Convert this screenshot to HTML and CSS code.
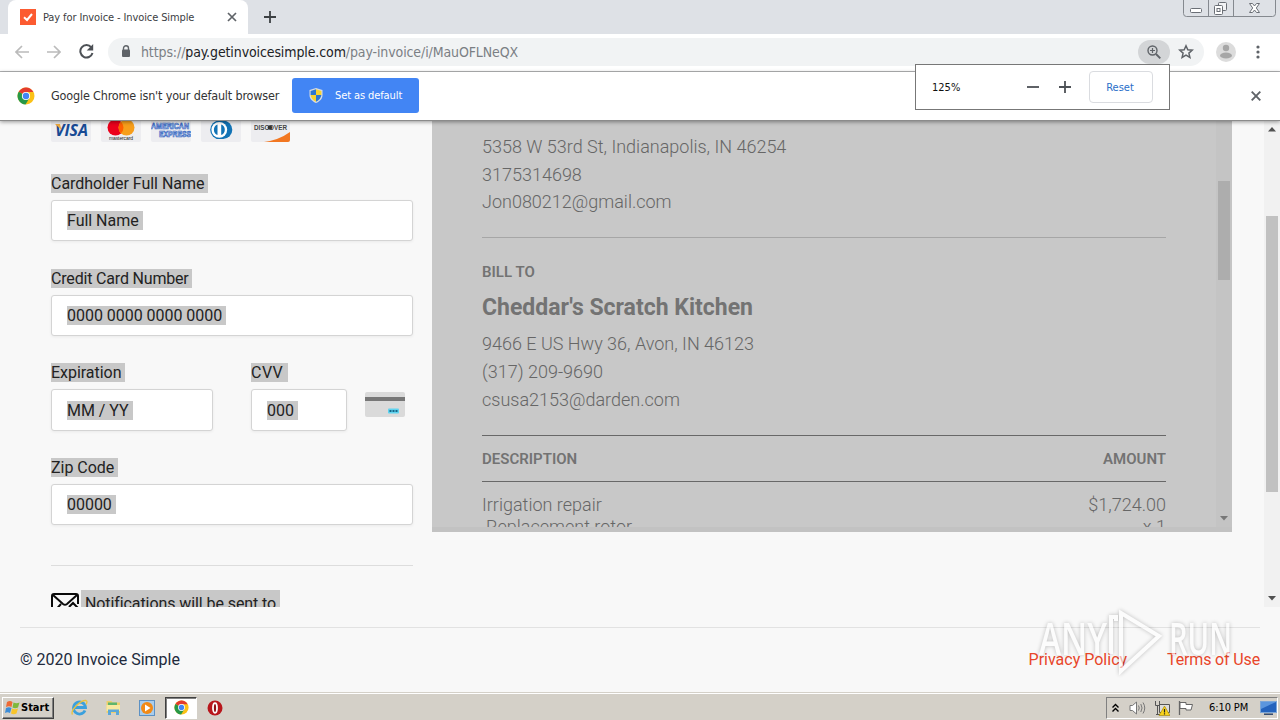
FILE: index.html
```html
<!DOCTYPE html>
<html lang="en">
<head>
  <meta charset="UTF-8">
  <title>Pay for Invoice - Invoice Simple</title>
  <link rel="stylesheet" href="styles.css">
</head>
<body>
  <!-- browser tabs -->
  <div class="tabstrip">
    <div class="tab">
      <svg class="favicon" width="16" height="16" viewBox="0 0 16 16"><path fill="#fc5b31" d="M0 0h16v16H0z"/><path d="M4 8.3l3 2.7 5-6" fill="none" stroke="#fff" stroke-width="2"/></svg>
      <span class="tab-title">Pay for Invoice - Invoice Simple</span>
      <svg width="10" height="10" viewBox="0 0 10 10"><path d="M1 1l8 8M9 1L1 9" stroke="#5f6368" stroke-width="1.7"/></svg>
    </div>
    <svg class="newtab" width="12" height="12" viewBox="0 0 12 12"><path d="M6 0v12M0 6h12" stroke="#3c4043" stroke-width="1.8"/></svg>
    <div class="wincontrols">
      <svg width="93" height="17" viewBox="0 0 93 17" fill="none" stroke="#6b6f76">
        <path d="M.5 0v13.500q0 3 3 3h86q3 0 3-3V0M25.500 0v16M50.500 0v16" stroke="#85898f"/>
        <rect x="7.500" y="8.500" width="11" height="4" rx="1" fill="#fff"/>
        <rect x="35.500" y="2.500" width="8" height="8" rx="1" fill="#f2f3f5"/>
        <rect x="31.500" y="5.500" width="8" height="9" rx="1" fill="#fff"/>
        <rect x="34" y="8.500" width="3" height="3"/>
        <path d="M66.500 3.500h3l2 2.500 2-2.500h3L73.300 8l3.200 4.500h-3l-2-2.500-2 2.500h-3L69.700 8z" fill="#fff"/>
      </svg>
    </div>
  </div>

  <!-- toolbar -->
  <div class="toolbar">
    <svg class="nav" width="14" height="14" viewBox="0 0 14 14" fill="none" stroke="#bbb" stroke-width="1.7"><path d="M14 7H1M7 1L1 7l6 6"/></svg>
    <svg class="nav" width="14" height="14" viewBox="0 0 14 14" fill="none" stroke="#bbb" stroke-width="1.7"><path d="M0 7h13M7 1l6 6-6 6"/></svg>
    <svg class="nav" width="15" height="15" viewBox="0 0 15 15"><path d="M12.300 3.300A6.200 6.200 0 1 0 13.500 9" fill="none" stroke="#4d5156" stroke-width="2"/><path d="M14.200 0v6.500H7.700z" fill="#4d5156"/></svg>
    <div class="omnibox">
      <svg width="10" height="13" viewBox="0 0 10 13"><path d="M2.500 5V3.300a2.500 2.500 0 0 1 5 0V5" fill="none" stroke="#5f6368" stroke-width="1.400"/><rect x="1" y="4.500" width="8" height="7.500" rx="1" fill="#5f6368"/></svg>
      <span class="url">https://<b>pay.getinvoicesimple.com</b>/pay-invoice/i/MauOFLNeQX</span>
      <span class="zoomchip"><svg width="14" height="14" viewBox="0 0 14 14" fill="none" stroke="#5f6368"><circle cx="5.500" cy="5.500" r="4.500" stroke-width="1.400"/><path d="M9 9l4.300 4.300" stroke-width="1.900"/><path d="M5.500 3v5M3 5.500h5" stroke-width="1.200"/></svg></span>
      <svg class="star" width="16" height="15" viewBox="0 0 16 15"><path d="M8 1.800l1.800 4 4.400.4-3.300 2.900 1 4.300L8 11.100l-3.900 2.300 1-4.300L1.800 6.200l4.400-.4z" fill="none" stroke="#5f6368" stroke-width="1.500"/></svg>
    </div>
    <svg class="avatar" width="20" height="20" viewBox="0 0 20 20"><circle cx="10" cy="10" r="10" fill="#dcdcdc"/><circle cx="10" cy="6" r="3.200" fill="#a6a6a6"/><ellipse cx="10" cy="13.500" rx="6" ry="3" fill="#a6a6a6"/></svg>
    <svg class="dots" width="4" height="14" viewBox="0 0 4 14" fill="#5f6368"><circle cx="2" cy="2" r="1.600"/><circle cx="2" cy="7" r="1.600"/><circle cx="2" cy="12" r="1.600"/></svg>
  </div>

  <div class="infobar">
    <svg class="chrome-logo" width="18" height="18" viewBox="0 0 18 18"><use href="#chrome"/></svg>
    <span class="infotext">Google Chrome isn't your default browser</span>
    <button class="default-btn">
      <svg width="14" height="15" viewBox="0 0 14 15"><path d="M7 0l6.500 2v5c0 4-3 6.500-6.500 8C3.500 13.500.5 11 .5 7V2z" fill="#d7dce2"/><path d="M7 1.300V7H1.600V2.900z" fill="#2d77d1"/><path d="M7 1.300V7h5.400V2.900zM1.600 7H7v6.700C4 12.300 2 10 1.600 7z" fill="#f8d32f"/><path d="M12.400 7H7v6.700C10 12.300 12 10 12.400 7z" fill="#2d77d1"/></svg>
      <span>Set as default</span>
    </button>
    <svg class="info-close" width="10" height="10" viewBox="0 0 10 10"><path d="M.7.700l8.600 8.600M9.300.700L.7 9.300" stroke="#5f6368" stroke-width="1.900"/></svg>
    <div class="zoom-bubble">
      <span class="percent">125%</span>
      <svg width="12" height="12" viewBox="0 0 12 12"><path d="M0 6h12" stroke="#4d5156" stroke-width="1.800"/></svg>
      <svg width="12" height="12" viewBox="0 0 12 12"><path d="M0 6h12M6 0v12" stroke="#4d5156" stroke-width="1.800"/></svg>
      <button class="reset">Reset</button>
    </div>
  </div>

  <div class="viewport">
    <div class="form">
      <div class="cards">
        <svg width="40" height="25" viewBox="0 0 40 25"><rect width="40" height="25" rx="2" fill="#ededf0"/><text class="visa" x="4" y="18.500" textLength="33" lengthAdjust="spacingAndGlyphs">VISA</text><path d="M4 7h5l1.500 6z" fill="#efaa3d"/></svg>
        <svg width="40" height="25" viewBox="0 0 40 25"><rect width="40" height="25" rx="2" fill="#ededf0"/><circle cx="14.500" cy="10.500" r="8" fill="#eb001b"/><circle cx="25.500" cy="10.500" r="8" fill="#f79e1b"/><path d="M20 4.700a8 8 0 0 1 0 11.600 8 8 0 0 1 0-11.600z" fill="#ff5f00"/><text class="mc" x="8" y="23" textLength="24">mastercard</text></svg>
        <svg width="40" height="25" viewBox="0 0 40 25"><rect width="40" height="25" rx="2" fill="#ededf0"/><text class="amex" x="0" y="11.500" textLength="38" lengthAdjust="spacingAndGlyphs">AMERICAN</text><text class="amex" x="8" y="19.500" textLength="32" lengthAdjust="spacingAndGlyphs">EXPRESS</text></svg>
        <svg width="40" height="25" viewBox="0 0 40 25"><rect width="40" height="25" rx="2" fill="#ededf0"/><path d="M18 3.500h4a9.300 9.300 0 0 1 0 18.600h-4z" fill="#1273b5"/><circle cx="18.500" cy="12.800" r="9.300" fill="#1273b5"/><circle cx="18.300" cy="12.800" r="7.900" fill="#fff"/><path d="M16.500 7.500a5.700 5.700 0 0 0 0 10.600zM20.200 7.500a5.700 5.700 0 0 1 0 10.600z" fill="#1273b5"/></svg>
        <svg width="39" height="25" viewBox="0 0 39 25"><rect width="39" height="25" rx="2" fill="#ededf0"/><path d="M39 15v8q0 2-2 2H13q15-2 26-10z" fill="#f27721"/><text class="disc" x="3" y="13" textLength="33" lengthAdjust="spacingAndGlyphs">DISCOVER</text><circle cx="18.900" cy="10.500" r="2.300" fill="#333"/></svg>
      </div>
      <div class="field">
        <label><mark>Cardholder Full Name </mark></label>
        <div class="input"><mark>Full Name </mark></div>
      </div>
      <div class="field">
        <label><mark class="tight">Credit Card Number </mark></label>
        <div class="input"><mark>0000 0000 0000 0000 </mark></div>
      </div>
      <div class="row">
        <div class="field exp">
          <label><mark>Expiration </mark></label>
          <div class="input"><mark>MM / YY </mark></div>
        </div>
        <div class="field cvv">
          <label><mark class="wide">CVV </mark></label>
          <div class="input"><mark>000 </mark></div>
        </div>
        <svg class="cvv-card" width="40" height="25" viewBox="0 0 40 25"><rect width="40" height="25" rx="2" fill="#dadada"/><path d="M0 5h40v4H0z" fill="#777"/><rect x="23" y="16.500" width="11" height="5" rx="1" fill="#5fd3ef"/><path d="M24.500 19h8" stroke="#16688a" stroke-width="1.800" stroke-dasharray="2 1"/></svg>
      </div>
      <div class="field">
        <label><mark>Zip Code </mark></label>
        <div class="input"><mark>00000 </mark></div>
      </div>
      <div class="notify">
        <svg width="28" height="22" viewBox="0 0 28 22" fill="none" stroke="#0a0a0a" stroke-width="2"><path d="M27 11V3q0-2-2-2H3Q1 1 1 3v16q0 2 2 2h12M2 2l10 9q2 1.500 4 0L26 2M2 20l8-9M18 14l4-4 5 5"/></svg>
        <mark> Notifications will be sent to </mark>
      </div>
    </div>

    <div class="invoice">
      <div class="invoice-body">
        <p class="l1">5358 W 53rd St, Indianapolis, IN 46254</p>
        <p class="l2">3175314698</p>
        <p class="l3">Jon080212@gmail.com</p>
        <div class="billto">
          <h4>BILL TO</h4>
          <h2>Cheddar's Scratch Kitchen</h2>
          <p class="l4">9466 E US Hwy 36, Avon, IN 46123</p>
          <p class="l5">(317) 209-9690</p>
          <p class="l6">csusa2153@darden.com</p>
        </div>
        <div class="items-head"><span>DESCRIPTION</span><span>AMOUNT</span></div>
        <div class="item"><span>Irrigation repair</span><span>$1,724.00</span></div>
        <div class="item detail"><span>Replacement rotor</span><span>x 1</span></div>
      </div>
      <div class="invoice-scroll">
        <div class="thumb"></div>
        <svg width="8" height="5" viewBox="0 0 8 5"><path d="M0 0h8L4 4.500z" fill="#777"/></svg>
      </div>
    </div>

    <div class="scrollbar">
      <svg width="8" height="5" viewBox="0 0 8 5"><path d="M0 4.500h8L4 0z" fill="#505050"/></svg>
      <div class="thumb"></div>
      <svg class="down" width="8" height="5" viewBox="0 0 8 5"><path d="M0 0h8L4 4.500z" fill="#505050"/></svg>
    </div>
  </div>

  <footer>
    <div class="footer-inner">
      <span>© 2020 Invoice Simple</span>
      <nav><a href="#">Privacy Policy</a><a href="#">Terms of Use</a></nav>
    </div>
    <div class="watermark">
      <svg width="200" height="68" viewBox="0 0 200 68">
        <g class="wm-shape"><path d="M84 4l38 23-38 35z"/><path d="M79 12v-4h-5v37"/></g>
        <text x="2" y="46" textLength="68" lengthAdjust="spacingAndGlyphs">ANY</text>
        <text x="132" y="46" textLength="63" lengthAdjust="spacingAndGlyphs">RUN</text>
      </svg>
    </div>
  </footer>

  <!-- taskbar -->
  <div class="taskbar">
    <div class="start">
      <svg width="15" height="15" viewBox="0 0 15 15"><path d="M2 2q3-2 5.500 0L6.500 7Q4 5.500 1 7z" fill="#ee6a35"/><path d="M8.500 2.500q3 1.500 6 0L13 7.500q-3 1.500-5.500 0z" fill="#7fb83c"/><path d="M1 8q3-1.500 5.500 0L5 13q-2.500-1.500-5 0z" fill="#3d8dd8"/><path d="M7 8.500q3 1.500 6 0l-1.500 5q-3 1.500-5.500 0z" fill="#f8c52c"/></svg>
      <span>Start</span>
    </div>
    <div class="launch">
      <svg width="17" height="17" viewBox="0 0 17 17"><path d="M14 11.500A6 6 0 1 1 14.500 8.500H4" fill="none" stroke="#3ba0dd" stroke-width="2.800"/><path d="M1.500 15.500C-1 12 9 1 15 1.500c1.500.5 1 2.500 0 4" fill="none" stroke="#e9c23e" stroke-width="1.300"/></svg>
    </div>
    <div class="launch">
      <svg width="17" height="17" viewBox="0 0 17 17"><path d="M1.500 2h5l1 1.500H15V14H1.500z" fill="#edcf6a"/><path d="M3 3.500h9V6H3z" fill="#5eb56d"/><path d="M1.500 6H15v6H1.500z" fill="#f8e9a1"/><path d="M3 16V10.500h11V16h-3v-3H6v3z" fill="#5ba7d8"/></svg>
    </div>
    <div class="launch">
      <svg width="16" height="16" viewBox="0 0 16 16"><rect x=".5" y=".5" width="15" height="15" fill="#a9cdec" stroke="#5c91c4"/><circle cx="8" cy="8" r="6" fill="#f28a16"/><path d="M6 4.500v7L11.500 8z" fill="#fff"/></svg>
    </div>
    <div class="launch active">
      <svg width="15" height="15" viewBox="0 0 18 18">
        <g id="chrome"><circle cx="9" cy="9" r="8.500" fill="#fbc116"/><path d="M9 9L1.700 4.700A8.500 8.500 0 0 1 16.400 5H9z" fill="#e33b2e"/><path d="M9 9l-7.300-4.300A8.500 8.500 0 0 0 8.500 17.500L12.500 11z" fill="#279847"/><circle cx="9" cy="9" r="4.100" fill="#fff"/><circle cx="9" cy="9" r="3.200" fill="#4285f4"/></g>
      </svg>
    </div>
    <div class="launch">
      <svg width="16" height="16" viewBox="0 0 16 16"><circle cx="8" cy="8" r="7.500" fill="#b8161c"/><ellipse cx="8" cy="8" rx="2" ry="4.800" fill="#8e1015" stroke="#fff" stroke-width="1.800"/></svg>
    </div>
    <div class="tray">
      <svg width="7" height="10" viewBox="0 0 7 10" fill="none" stroke="#000" stroke-width="1.400"><path d="M.5 4.500l3-3 3 3M.5 8.500l3-3 3 3"/></svg>
      <svg width="17" height="14" viewBox="0 0 17 14" fill="none" stroke="#777"><path d="M1 4.500h2.500L7.500 1v12L3.500 9.500H1z" fill="#fff"/><path d="M9.500 4.500q1.500 2.500 0 5M11.800 3q2.500 4 0 8M14 1.500q3.500 5.500 0 11"/></svg>
      <svg width="16" height="16" viewBox="0 0 16 16"><path d="M5.500 4.500h10v8h-10z" fill="#ddd" stroke="#555"/><path d="M1.500 1v4.500h4V1M3.500 6v9M2 14.500h5" fill="none" stroke="#555"/><path d="M10.500 6L16 15.500H5z" fill="#f8d21c" stroke="#9a7d00" stroke-width=".6"/><path d="M10.500 9v3.500M10.500 13.300v1.200" stroke="#222" stroke-width="1.200"/></svg>
      <svg width="16" height="16" viewBox="0 0 16 16"><path d="M1.500 1v14" stroke="#666" stroke-width="1.300"/><path d="M2 2.500h6v2h6.500L13 10H8V8.500H2z" fill="#fff" stroke="#666"/></svg>
      <span class="clock">6:10 PM</span>
      <svg class="show-desk" width="17" height="14" viewBox="0 0 17 14"><rect x=".5" y=".5" width="16" height="11" fill="#2463bd" stroke="#7ba6d8"/><path d="M1 1h15L1 8z" fill="#5b96de"/><path d="M4 13.200h9" stroke="#243f66" stroke-width="1.400"/></svg>
    </div>
  </div>
</body>
</html>
```
FILE: styles.css
```css
* {
  box-sizing: border-box;
  margin: 0;
}

body {
  width: 1280px;
  height: 720px;
  overflow: hidden;
  display: flex;
  flex-direction: column;
  background: #f8f8f8;
  font-family: Roboto, sans-serif;
  font-size: 16px;
  color: #222;
}

svg {
  display: block;
  flex: none;
}

button {
  font: inherit;
  border: 0;
}

/* browser window */

.tabstrip, .toolbar, .infobar, .taskbar {
  flex: none;
  display: flex;
  align-items: center;
  font-family: "DejaVu Sans Condensed", "DejaVu Sans", sans-serif;
  font-stretch: condensed;
  white-space: nowrap;
}

.tabstrip {
  height: 34px;
  padding-left: 8px;
  background: #dee1e6;
}

.tab {
  width: 240px;
  height: 34px;
  padding: 0 11px 0 12px;
  display: flex;
  align-items: center;
  background: #fff;
  border-radius: 8px 8px 0 0;
}

.tab-title {
  width: 191px;
  padding-left: 7px;
  font-size: 11px;
  letter-spacing: -0.11px;
  color: #3c4043;
}

.newtab {
  margin-left: 16px;
}

.wincontrols {
  margin-left: auto;
  padding-right: 4px;
  align-self: flex-start;
}

.toolbar {
  height: 38px;
  padding: 0 20px 2px 15px;
  background: #fff;
  border-bottom: 1px solid #b4b5b7;
}

.nav {
  margin-right: 18px;
}

.omnibox {
  width: 1096px;
  height: 28px;
  margin-left: -4px;
  padding: 0 10px 0 13px;
  display: flex;
  align-items: center;
  border-radius: 14px;
  background: #f1f3f4;
}

.url {
  margin-left: 10px;
  font-size: 14px;
  letter-spacing: -0.11px;
  color: #7b7f84;
}

.url b {
  font-weight: normal;
  color: #202124;
}

.zoomchip {
  width: 32px;
  height: 24px;
  margin-left: auto;
  display: flex;
  align-items: center;
  justify-content: center;
  border-radius: 12px;
  background: #d3d5d7;
}

.star {
  margin-left: 8px;
}

.avatar {
  margin-left: 12px;
}

.dots {
  margin-left: auto;
}

.infobar {
  position: relative;
  z-index: 2;
  height: 49px;
  padding: 0 19px 0 17px;
  background: #fff;
  border-bottom: 1px solid #8b8b8b;
  box-shadow: 0 1px 4px rgba(0, 0, 0, 0.4);
}

.infotext {
  width: 241px;
  margin-left: 16px;
  padding-bottom: 2px;
  font-size: 12.5px;
  letter-spacing: -0.17px;
  color: #333;
}

.default-btn {
  width: 127px;
  height: 35px;
  margin-bottom: 2px;
  padding: 0 0 0 17px;
  display: flex;
  align-items: center;
  gap: 12px;
  border-radius: 3px;
  background: #4285f4;
  color: #fff;
  font-size: 11px;
  letter-spacing: -0.1px;
}

.info-close {
  margin-left: auto;
}

.zoom-bubble {
  position: absolute;
  top: -8px;
  left: 915px;
  width: 255px;
  height: 46px;
  padding-left: 16px;
  display: flex;
  align-items: center;
  gap: 20px;
  border: 1px solid #777;
  background: #fff;
  font-size: 11px;
}

.percent {
  width: 75px;
  color: #111;
}

.reset {
  width: 64px;
  height: 32px;
  margin-left: -2px;
  padding: 0 2px 0 0;
  border: 1px solid #dadce0;
  border-radius: 4px;
  background: #fff;
  color: #2a6fc9;
}

/* page */

.viewport {
  flex: none;
  height: 486px;
  display: flex;
  align-items: flex-start;
  overflow: hidden;
  background: #f8f8f8;
}

.form {
  width: 362px;
  margin: -4px 19px 0 51px;
}

.cards {
  display: flex;
  gap: 10px;
  margin-bottom: 32px;
}

.visa {
  font: italic bold 16px "Open Sans", sans-serif;
  fill: #174a94;
}

.mc {
  font: 5px "Liberation Sans", sans-serif;
  fill: #222;
}

.amex {
  font: bold 9px "Liberation Sans", sans-serif;
  fill: #d9e2f5;
  stroke: #2f62c0;
  stroke-width: 0.7px;
}

.disc {
  font: bold 7px "Liberation Sans", sans-serif;
  fill: #444;
}

mark {
  display: inline-block;
  height: 19px;
  line-height: 19px;
  white-space: pre;
  letter-spacing: -0.03px;
  background: #c8c8c8;
  color: #222;
}

.tight {
  letter-spacing: -0.18px;
}

.wide {
  letter-spacing: 0.5px;
}

.field {
  height: 94.670px;
}

.field label {
  display: block;
  height: 26px;
  line-height: 19px;
}

.input {
  height: 41.400px;
  padding-left: 15px;
  display: flex;
  align-items: center;
  border: 1px solid #d4d4d4;
  border-radius: 3px;
  background: #fff;
  box-shadow: 0 1px 3px rgba(0, 0, 0, 0.06);
}

.row {
  display: flex;
}

.exp {
  width: 162px;
  margin-right: 38px;
}

.cvv {
  width: 96px;
  margin-right: 18px;
}

.cvv-card {
  margin-top: 29px;
}

.notify {
  height: 60px;
  margin-top: 12px;
  padding-top: 24px;
  display: flex;
  gap: 2px;
  border-top: 1px solid #ddd;
}

.notify svg {
  margin-top: 3px;
}

.notify mark {
  height: 27px;
  line-height: 27px;
  letter-spacing: -0.08px;
}

.invoice {
  width: 800px;
  height: 411px;
  display: flex;
  background: #c8c8c8;
  border-bottom: 5px solid #c2c2c2;
}

.invoice-body {
  width: 734px;
  height: 406px;
  padding: 12px 0 0 50px;
  overflow: hidden;
  font-size: 18px;
  font-weight: 300;
  line-height: 28px;
  color: #666;
}

.l2, .l3 {
  margin-top: -0.5px;
}

.billto {
  margin-top: 21px;
  padding-top: 24px;
  height: 198px;
  border-top: 1px solid #a6a6a6;
}

.billto h4, .items-head {
  font-size: 15px;
  line-height: 20px;
  font-weight: 600;
  color: #737373;
}

.billto h2 {
  margin: 10px 0 6px;
  font-size: 23px;
  line-height: 32px;
  color: #737373;
}

.items-head {
  height: 47px;
  padding-top: 1px;
  display: flex;
  align-items: center;
  justify-content: space-between;
  border-top: 1px solid #686868;
  border-bottom: 1px solid #686868;
}

.item {
  height: 22px;
  margin-top: 12px;
  line-height: 22px;
  display: flex;
  justify-content: space-between;
}

.detail {
  margin-top: 0;
  padding-left: 4px;
}

.invoice-scroll {
  width: 16px;
  height: 406px;
  margin-left: auto;
  padding: 60px 0 6px;
  display: flex;
  flex-direction: column;
  align-items: center;
  justify-content: space-between;
  background: #c4c4c4;
}

.invoice-scroll .thumb {
  width: 12px;
  height: 99px;
  background: #adadad;
}

.scrollbar {
  width: 16px;
  height: 486px;
  margin-left: auto;
  padding: 6px 0;
  display: flex;
  flex-direction: column;
  align-items: center;
  background: #f1f1f1;
}

.scrollbar .thumb {
  width: 12px;
  height: 276px;
  margin-top: 84px;
  background: #c1c1c1;
}

.scrollbar .down {
  margin-top: auto;
}

footer {
  position: relative;
  flex: none;
  height: 85px;
  padding: 20px 20px 0;
}

.footer-inner {
  display: flex;
  justify-content: space-between;
  padding-top: 22px;
  line-height: 20px;
  border-top: 1px solid #e2e2e2;
  color: #222a3c;
}

footer a {
  margin-left: 40px;
  color: #e8462a;
  text-decoration: none;
}

footer a + a {
  letter-spacing: -0.15px;
}

.watermark {
  position: absolute;
  left: 1037px;
  top: 2px;
  filter: drop-shadow(0 0 2px rgba(0, 0, 0, 0.4));
  opacity: 0.6;
}

.watermark text {
  font: 600 45px "Open Sans", sans-serif;
  fill: #fff;
}

.wm-shape {
  fill: none;
  stroke: #fff;
  stroke-width: 4px;
}

/* windows taskbar */

.taskbar {
  height: 28px;
  padding: 2px 2px 0;
  background: #d4d0c8;
  border-top: 1px solid #d4d0c8;
  box-shadow: inset 0 1px #fff;
}

.start {
  width: 52px;
  height: 22px;
  padding-left: 2px;
  display: flex;
  align-items: center;
  gap: 1px;
  border: 1px solid;
  border-color: #fff #404040 #404040 #fff;
  box-shadow: inset -1px -1px #808080;
  font-weight: bold;
  font-size: 11px;
  letter-spacing: 0;
  color: #000;
  margin-right: 9px;
}

.launch {
  width: 32px;
  height: 22px;
  margin-right: 2px;
  display: flex;
  align-items: center;
  justify-content: center;
}

.active {
  background: #fff;
  border: 1px solid;
  border-color: #404040 #fff #fff #404040;
  box-shadow: inset 1px 1px #808080;
}

.tray {
  width: 172px;
  height: 22px;
  margin-left: auto;
  padding-left: 5px;
  display: flex;
  align-items: center;
  gap: 8px;
  border: 1px solid;
  border-color: #808080 #fff #fff #808080;
}

.tray svg:first-child {
  margin-right: 2px;
}

.clock {
  margin-left: 7px;
  font-size: 11px;
  letter-spacing: -0.1px;
  color: #000;
}

.show-desk {
  margin-left: auto;
}
```
